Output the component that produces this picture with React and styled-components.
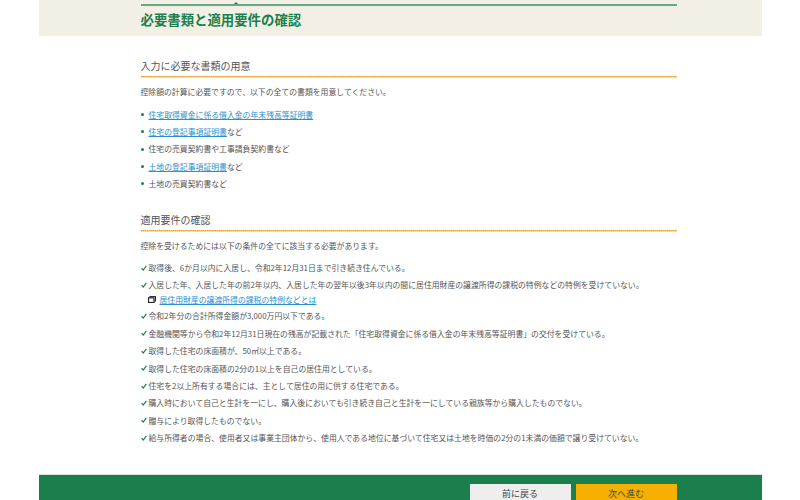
import React from 'react';
import styled, { createGlobalStyle } from 'styled-components';

const GlobalStyle = createGlobalStyle`
  html, body {
    margin: 0;
    height: 500px;
    overflow: hidden;
    background: #fff;
  }
  body {
    font-family: "Noto Sans CJK JP", "Open Sans", sans-serif;
    color: #555;
  }
`;

const Page = styled.div`
  width: 723px;
  height: 500px;
  margin: 0 auto;
  display: flex;
  flex-direction: column;
  overflow: hidden;
`;

const Header = styled.header`
  height: 36px;
  flex: none;
  background: #f2efe4;
  padding: 4px 85px 0 102px;
  box-sizing: border-box;
`;

const Title = styled.h1`
  position: relative;
  margin: 0;
  border-top: 2px solid #68a884;
  padding-top: 3px;
  font-size: 13.4px;
  line-height: 20px;
  font-weight: 700;
  color: #1c7f4d;

  &::before {
    content: '';
    position: absolute;
    left: 93px;
    top: -4px;
    border-left: 2px solid transparent;
    border-right: 2px solid transparent;
    border-bottom: 2px solid #1c7f4d;
  }
`;

const Main = styled.main`
  flex: 1;
  min-height: 0;
  padding: 21px 85px 0 102px;
`;

const Section = styled.section`
  margin-bottom: 18px;
`;

const Heading = styled.h2`
  margin: 0;
  padding-bottom: 3px;
  border-bottom: 1px solid #fdd9a0;
  background-image: linear-gradient(to right, #f7a000 60%, #fbc468 60%);
  background-size: 2px 1px;
  background-repeat: repeat-x;
  background-position: left bottom;
  font-size: 10px;
  line-height: 17px;
  font-weight: 400;
  color: #555;
`;

const Lead = styled.p`
  margin: 5px 0 5.5px;
  font-size: 7.85px;
  line-height: 17px;
`;

const List = styled.ul`
  margin: 0;
  padding: 0;
  list-style: none;
`;

const Item = styled.li`
  display: flex;
  align-items: center;
  min-height: 17.4px;
  font-size: 7.85px;
  line-height: 17.4px;
  white-space: nowrap;
`;

const Dot = styled.span`
  width: 3px;
  height: 3px;
  margin-right: 5px;
  border-radius: 50%;
  background: #1c7f4d;
  flex: none;
`;

const Check = styled.svg`
  width: 6px;
  height: 6px;
  margin-right: 2px;
  flex: none;
`;

const Link = styled.a`
  color: #2c8fd0;
  text-decoration: underline;
`;

const SubRow = styled.div`
  display: flex;
  align-items: center;
  height: 11px;
  margin-bottom: 2.5px;
  padding-left: 7px;
  font-size: 7.85px;
  line-height: 11px;
  white-space: nowrap;
`;

const DocIcon = styled.svg`
  width: 8px;
  height: 7px;
  margin-right: 4px;
  flex: none;
`;

const Footer = styled.footer`
  flex: none;
  height: 26px;
  background: #1a7f4d;
  border-top: 1px solid #d5e3da;
  box-sizing: border-box;
  padding: 9px 85px 0 0;
  display: flex;
  justify-content: flex-end;
  gap: 5px;
`;

const Button = styled.button`
  width: 101px;
  height: 32px;
  flex: none;
  border: none;
  padding: 0 0 12px;
  font-family: inherit;
  font-size: 9px;
  line-height: 20px;
  color: #444;
  background: ${(p) => (p.$primary ? '#f7b000' : '#eeeeee')};
`;

const Tick = () => (
  <Check viewBox="0 0 6 6">
    <path d="M0.6 3.2 L2.2 5 L5.4 0.8" fill="none" stroke="#1c7f4d" strokeWidth="1.2" />
  </Check>
);

const requirements = [
  '取得後、6か月以内に入居し、令和2年12月31日まで引き続き住んでいる。',
  '入居した年、入居した年の前2年以内、入居した年の翌年以後3年以内の間に居住用財産の譲渡所得の課税の特例などの特例を受けていない。',
];

const requirementsRest = [
  '令和2年分の合計所得金額が3,000万円以下である。',
  '金融機関等から令和2年12月31日現在の残高が記載された「住宅取得資金に係る借入金の年末残高等証明書」の交付を受けている。',
  '取得した住宅の床面積が、50㎡以上である。',
  '取得した住宅の床面積の2分の1以上を自己の居住用としている。',
  '住宅を2以上所有する場合には、主として居住の用に供する住宅である。',
  '購入時において自己と生計を一にし、購入後においても引き続き自己と生計を一にしている親族等から購入したものでない。',
  '贈与により取得したものでない。',
  '給与所得者の場合、使用者又は事業主団体から、使用人である地位に基づいて住宅又は土地を時価の2分の1未満の価額で譲り受けていない。',
];

export default function App() {
  return (
    <Page>
      <GlobalStyle />
      <Header>
        <Title>必要書類と適用要件の確認</Title>
      </Header>
      <Main>
        <Section>
          <Heading>入力に必要な書類の用意</Heading>
          <Lead>控除額の計算に必要ですので、以下の全ての書類を用意してください。</Lead>
          <List>
            <Item><Dot /><span><Link href="#">住宅取得資金に係る借入金の年末残高等証明書</Link></span></Item>
            <Item><Dot /><span><Link href="#">住宅の登記事項証明書</Link>など</span></Item>
            <Item><Dot /><span>住宅の売買契約書や工事請負契約書など</span></Item>
            <Item><Dot /><span><Link href="#">土地の登記事項証明書</Link>など</span></Item>
            <Item><Dot /><span>土地の売買契約書など</span></Item>
          </List>
        </Section>
        <Section>
          <Heading>適用要件の確認</Heading>
          <Lead>控除を受けるためには以下の条件の全てに該当する必要があります。</Lead>
          <List>
            {requirements.map((text) => (
              <Item key={text}><Tick /><span>{text}</span></Item>
            ))}
            <SubRow>
              <DocIcon viewBox="0 0 8 7">
                <rect x="2" y="0.5" width="5.5" height="4.5" fill="#fff" stroke="#333" />
                <rect x="0.5" y="1.8" width="5.5" height="4.7" fill="#fff" stroke="#222" strokeWidth="1.2" />
              </DocIcon>
              <Link href="#">居住用財産の譲渡所得の課税の特例などとは</Link>
            </SubRow>
            {requirementsRest.map((text) => (
              <Item key={text}><Tick /><span>{text}</span></Item>
            ))}
          </List>
        </Section>
      </Main>
      <Footer>
        <Button>前に戻る</Button>
        <Button $primary>次へ進む</Button>
      </Footer>
    </Page>
  );
}
